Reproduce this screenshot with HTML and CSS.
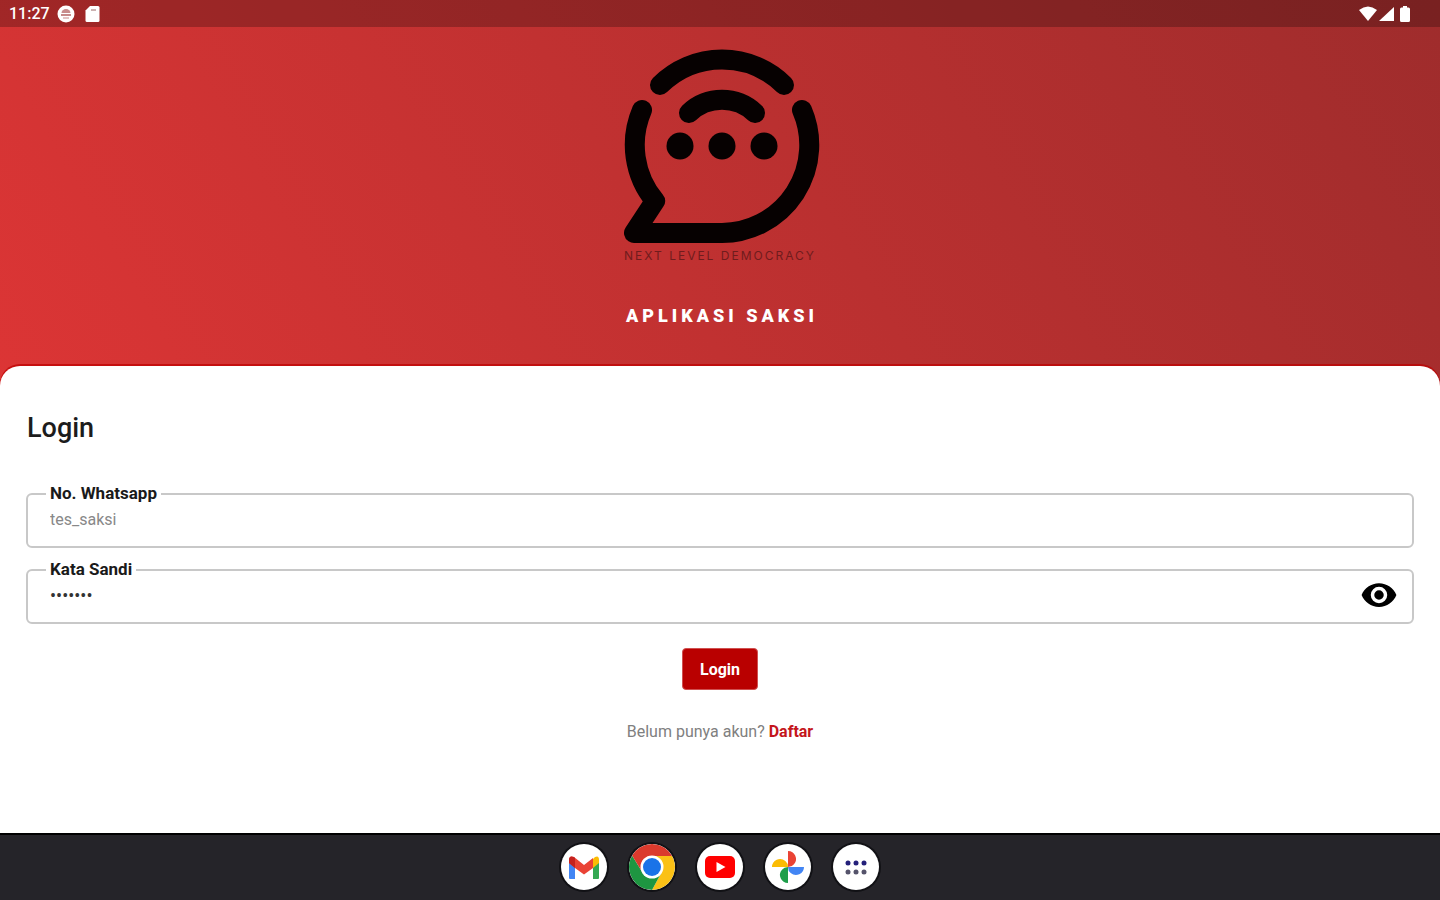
FILE: index.html
```html
<!DOCTYPE html>
<html lang="id">
<head>
    <meta charset="UTF-8">
    <meta name="viewport" content="width=device-width, initial-scale=1.0">
    <title>Aplikasi Saksi</title>
    <link rel="stylesheet" href="styles.css">
</head>
<body>

<div class="hero">
    <!-- Status bar -->
    <div class="status-bar">
        <div class="status-group">
            <span class="time">11:27</span>
            <svg width="18" height="18" viewBox="0 0 18 18">
                <circle cx="9" cy="9" r="8.5" fill="#fff"/>
                <path d="M4.5 8a4.5 4 0 0 1 9 0z" fill="#c98d8d"/>
                <path d="M4 10h10" stroke="#b56565" stroke-width="1.5"/>
                <path d="M6 13h6" stroke="#dcb0b0" stroke-width="1.5"/>
            </svg>
            <svg class="sd-icon" width="15" height="18" viewBox="0 0 15 18">
                <path d="M5 1h8a1.5 1.5 0 0 1 1.5 1.5v13A1.5 1.5 0 0 1 13 17H2A1.5 1.5 0 0 1 .5 15.5V5.5z" fill="#fff"/>
                <path d="M6 5h5" stroke="#b99" stroke-width="1.5"/>
            </svg>
        </div>
        <div class="status-group status-right">
            <svg width="18" height="16" viewBox="0 0 18 16"><path d="M0 4Q9-3 18 4L9 15z" fill="#fff"/></svg>
            <svg width="15" height="16" viewBox="0 0 15 16"><path d="M15 1v14H0z" fill="#fff"/></svg>
            <svg class="battery" width="10" height="16" viewBox="0 0 10 16"><path d="M3 0h4v1.5h1.5Q10 1.500 10 3v11.5Q10 16 8.5 16h-7Q0 16 0 14.5V3q0-1.5 1.5-1.5H3z" fill="#fff"/></svg>
        </div>
    </div>

    <!-- Logo -->
    <div class="brand">
        <svg class="logo" width="196" height="196" viewBox="0 0 196 196">
            <g fill="none" stroke="#060101" stroke-width="20" stroke-linecap="round" stroke-linejoin="round">
                <path d="M36 37A88 88 0 0 1 160 37"/>
                <path d="M65 65A48 48 0 0 1 131 65"/>
                <path d="M18 62A88 88 0 0 0 31 153L10 185H98A88 88 0 0 0 178 62"/>
            </g>
            <g fill="#060101">
                <circle cx="56" cy="98" r="13.5"/>
                <circle cx="98" cy="98" r="13.5"/>
                <circle cx="140" cy="98" r="13.5"/>
            </g>
        </svg>
        <div class="tagline">NEXT LEVEL DEMOCRACY</div>
        <h1>APLIKASI SAKSI</h1>
    </div>
</div>

<!-- Form Login -->
<main class="card">
    <h2>Login</h2>
    <form>
        <div class="field">
            <label for="phone">No. Whatsapp</label>
            <input type="text" id="phone" value="tes_saksi">
        </div>
        <div class="field">
            <label for="password">Kata Sandi</label>
            <input type="password" id="password" value="1234567">
            <button type="button" class="toggle" aria-label="Tampilkan kata sandi">
                <svg width="38" height="38" viewBox="0 0 24 24"><path d="M12 4.5C7 4.5 2.730 7.610 1 12c1.730 4.390 6 7.5 11 7.5s9.270-3.110 11-7.5c-1.730-4.390-6-7.5-11-7.5zM12 17.200a5.200 5.200 0 1 1 0-10.400 5.200 5.200 0 0 1 0 10.400zm0-8.200a3 3 0 1 0 0 6 3 3 0 0 0 0-6z" fill="#000"/></svg>
            </button>
        </div>
        <button type="submit" class="submit">Login</button>
    </form>
    <p class="register">Belum punya akun? <a href="#">Daftar</a></p>
</main>

<!-- Taskbar -->
<nav class="taskbar">
    <a href="#" aria-label="Gmail">
        <svg viewBox="0 0 46 46">
            <path d="M8 16v18q0 1 1 1h5V21z" fill="#4285f4"/>
            <path d="M38 16v18q0 1-1 1h-5V21z" fill="#34a853"/>
            <path d="M32 15l2-2q4-2 4 3v3l-6 5z" fill="#fbbc04"/>
            <path d="M8 19v-3q0-5 5-3l10 8 9-7v10l-9 6.5L14 24z" fill="#ea4335"/>
            <path d="M8 19v-3q0-5 5-3l1 1v10z" fill="#c5221f"/>
        </svg>
    </a>
    <a href="#" aria-label="Chrome">
        <svg viewBox="0 0 46 46">
            <path d="M23 12H43.200A23 23 0 0 1 23 46L32.5 28.5z" fill="#fbc116"/>
            <path d="M13.5 28.5L3.080 11.5A23 23 0 0 0 23 46l9.5-17.5z" fill="#1e9641"/>
            <path d="M3.080 11.5L13.5 28.5 23 12H43.200A23 23 0 0 0 3.080 11.5z" fill="#db3a2d"/>
            <circle cx="23" cy="23" r="11.5" fill="#fff"/>
            <circle cx="23" cy="23" r="9" fill="#1a73e8"/>
        </svg>
    </a>
    <a href="#" aria-label="YouTube">
        <svg viewBox="0 0 46 46">
            <rect x="8" y="12" width="30" height="22" rx="5" fill="#f00"/>
            <path d="M19.5 18v10l9-5z" fill="#fff"/>
        </svg>
    </a>
    <a href="#" aria-label="Google Foto">
        <svg viewBox="0 0 46 46">
            <path d="M23 23V7a8 8 0 0 1 6 13.300Q27 23 23 23z" fill="#ea4335"/>
            <path d="M23 23H39a8 8 0 0 1-13.300 6Q23 27 23 23z" fill="#4285f4"/>
            <path d="M23 23V39a8 8 0 0 1-6-13.300Q19 23 23 23z" fill="#1e9e4a"/>
            <path d="M23 23H7a8 8 0 0 1 13.300-6Q23 19 23 23z" fill="#fbbc04"/>
        </svg>
    </a>
    <a href="#" aria-label="Semua aplikasi">
        <svg viewBox="0 0 46 46">
            <g fill="#24207a"><circle cx="15" cy="19" r="2.5"/><circle cx="23" cy="19" r="2.5"/><circle cx="31" cy="19" r="2.5"/></g>
            <g fill="#55536b"><circle cx="15" cy="28" r="2.5"/><circle cx="23" cy="28" r="2.5"/><circle cx="31" cy="28" r="2.5"/></g>
        </svg>
    </a>
</nav>

</body>
</html>
```
FILE: styles.css
```css
* {
    box-sizing: border-box;
}

body {
    margin: 0;
    min-height: 100vh;
    display: flex;
    flex-direction: column;
    font-family: Roboto, sans-serif;
    background: #fff;
}

.hero {
    background: linear-gradient(60deg, #dc3535, #9f2c2c);
    padding-bottom: 58px;
}

.status-bar {
    display: flex;
    justify-content: space-between;
    align-items: center;
    height: 27px;
    padding: 0 30px 0 9px;
    background: rgba(0, 0, 0, 0.24);
    color: #fff;
}

.status-group {
    display: flex;
    align-items: center;
    gap: 7px;
}

.status-right {
    gap: 2px;
}

.sd-icon {
    margin-left: 3px;
}

.battery {
    margin-left: 4px;
}

.time {
    font-size: 16px;
    font-weight: 500;
}

.brand {
    display: flex;
    flex-direction: column;
    align-items: center;
    padding-top: 21px;
}

.logo {
    display: block;
    margin-left: 4px;
}

.tagline {
    margin-top: 4px;
    font-family: Inter, sans-serif;
    font-size: 12px;
    line-height: 16px;
    letter-spacing: 2px;
    color: #701c1d;
}

h1 {
    margin: 40px 0 0;
    padding-left: 4px;
    font-size: 18px;
    line-height: 24px;
    font-weight: 900;
    letter-spacing: 4px;
    color: #fff;
}

.card {
    flex: 1;
    margin-top: -20px;
    padding: 46px 26px 30px;
    border-radius: 20px 20px 0 0;
    background: #fff;
    box-shadow: 0 -2px 0 rgba(190, 0, 0, 0.7);
}

h2 {
    margin: 0 0 49px 1px;
    font-size: 27px;
    line-height: 32px;
    font-weight: 500;
    color: #1c1c1c;
}

form {
    display: flex;
    flex-direction: column;
    gap: 21px;
}

.field {
    position: relative;
    display: flex;
    align-items: center;
    height: 55px;
    padding-bottom: 3px;
    border: 2px solid #c8c8c8;
    border-radius: 6px;
}

.field label {
    position: absolute;
    top: -12px;
    left: 18px;
    padding: 0 4px;
    font-size: 17px;
    line-height: 20px;
    font-weight: 700;
    color: #1a1a1a;
    background: #fff;
}

.field input {
    flex: 1;
    min-width: 0;
    height: 48px;
    padding: 0 22px;
    border: none;
    outline: none;
    background: none;
    font-family: inherit;
    font-size: 16px;
    color: #888;
}

.field input[type="password"] {
    font-size: 18px;
    color: #333;
}

.toggle {
    margin-right: 14px;
    padding: 0;
    border: none;
    background: none;
    cursor: pointer;
}

.toggle svg {
    display: block;
}

.submit {
    align-self: center;
    height: 42px;
    margin-top: 3px;
    padding: 0 17px;
    border: 1px solid #d05050;
    border-radius: 4px;
    background: #b90000;
    color: #fff;
    font-family: inherit;
    font-size: 16px;
    font-weight: 700;
    cursor: pointer;
}

.register {
    margin: 32px 0 0;
    font-size: 16px;
    line-height: 20px;
    text-align: center;
    color: #808080;
}

.register a {
    color: #c4161c;
    font-weight: 700;
    text-decoration: none;
}

.taskbar {
    display: flex;
    justify-content: center;
    align-items: center;
    gap: 22px;
    height: 67px;
    padding-bottom: 2px;
    border-top: 2px solid #000;
    background: #252429;
}

.taskbar a {
    width: 46px;
    height: 46px;
    border-radius: 50%;
    background: #fff;
    overflow: hidden;
    box-shadow: 0 0 0 2px #111115;
}

.taskbar svg {
    display: block;
}
```
